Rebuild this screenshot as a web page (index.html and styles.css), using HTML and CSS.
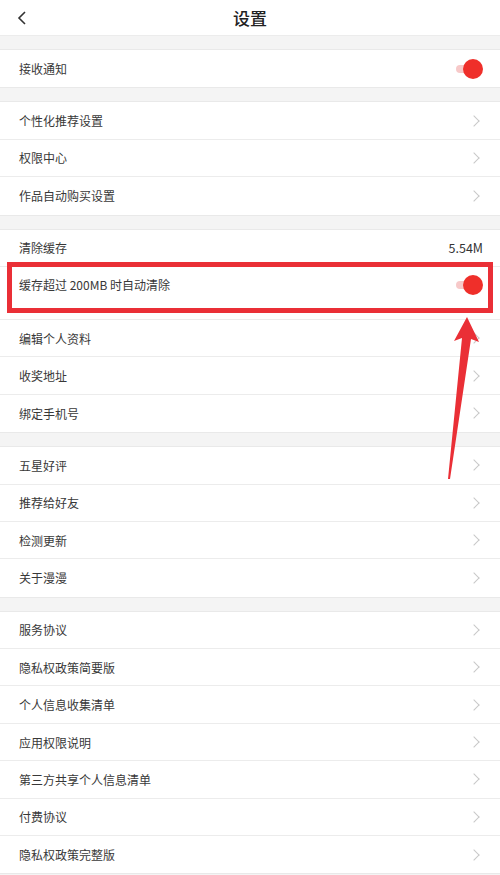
FILE: index.html
```html
<!DOCTYPE html>
<html>
<head>
<meta charset="UTF-8">
<title>设置</title>
<link rel="stylesheet" href="styles.css">
</head>
<body>
<div class="page">
    <div class="header">
        <svg class="back" width="12" height="16" viewBox="0 0 12 16"><path d="M9 2 L3 8 L9 14" fill="none" stroke="#333" stroke-width="1.6"/></svg>
        <div class="title">设置</div>
    </div>

    <div class="group">
        <div class="row"><span>接收通知</span><span class="switch"></span></div>
    </div>

    <div class="group">
        <div class="row"><span>个性化推荐设置</span><i class="chev"></i></div>
        <div class="row"><span>权限中心</span><i class="chev"></i></div>
        <div class="row"><span>作品自动购买设置</span><i class="chev"></i></div>
    </div>

    <div class="group">
        <div class="row"><span>清除缓存</span><span class="value">5.54M</span></div>
        <div class="row tall"><span>缓存超过 200MB 时自动清除</span><span class="switch"></span><div class="mark"></div></div>
        <div class="row"><span>编辑个人资料</span><i class="chev"></i></div>
        <div class="row"><span>收奖地址</span><i class="chev"></i></div>
        <div class="row"><span>绑定手机号</span><i class="chev"></i></div>
    </div>

    <div class="group">
        <div class="row"><span>五星好评</span><i class="chev"></i></div>
        <div class="row"><span>推荐给好友</span><i class="chev"></i></div>
        <div class="row"><span>检测更新</span><i class="chev"></i></div>
        <div class="row"><span>关于漫漫</span><i class="chev"></i></div>
    </div>

    <div class="group">
        <div class="row"><span>服务协议</span><i class="chev"></i></div>
        <div class="row"><span>隐私权政策简要版</span><i class="chev"></i></div>
        <div class="row"><span>个人信息收集清单</span><i class="chev"></i></div>
        <div class="row"><span>应用权限说明</span><i class="chev"></i></div>
        <div class="row"><span>第三方共享个人信息清单</span><i class="chev"></i></div>
        <div class="row"><span>付费协议</span><i class="chev"></i></div>
        <div class="row"><span>隐私权政策完整版</span><i class="chev"></i></div>
    </div>

    <!-- 标注箭头 -->
    <svg class="arrow" width="500" height="875" viewBox="0 0 500 875">
        <polygon points="467,317 479,342 471,339 450,479 448,479 462,338 454,341" fill="#ea2f36"/>
    </svg>
</div>
</body>
</html>
```

FILE: styles.css
```css
body{
    margin: 0;
    background: #f4f4f4;
    font-family: "Noto Sans CJK SC", "Noto Sans", sans-serif;
}
.page{
    position: relative;
    width: 500px;
    height: 875px;
    overflow: hidden;
}
.header{
    height: 36px;
    background: #fff;
    display: flex;
    align-items: center;
    justify-content: center;
    position: relative;
    border-bottom: 1px solid #ececec;
    box-sizing: border-box;
}
.header .back{
    position: absolute;
    left: 16px;
    top: 10px;
}
.title{
    font-size: 17px;
    font-weight: 500;
    color: #222;
}
.group{
    margin-top: 13px;
    background: #fff;
    border-top: 1px solid #e9e9e9;
    border-bottom: 1px solid #e9e9e9;
}
.row{
    height: 37.4px;
    box-sizing: border-box;
    padding: 0 18px 0 19px;
    display: flex;
    align-items: center;
    justify-content: space-between;
    font-size: 12px;
    color: #383838;
    border-bottom: 1px solid #ececec;
    position: relative;
}
.row:last-child{
    border-bottom: none;
}
.row.tall{
    height: 53px;
    padding-bottom: 16px;
}
.value{
    font-size: 12.5px;
    color: #333;
    margin-right: -1px;
}
.chev{
    width: 7px;
    height: 7px;
    border-top: 1px solid #c8c8c8;
    border-right: 1px solid #c8c8c8;
    transform: rotate(45deg);
    margin-right: 4px;
}
.switch{
    position: relative;
    width: 26px;
    height: 20px;
}
.switch:before{
    content: "";
    position: absolute;
    left: 0;
    top: 6px;
    width: 22px;
    height: 8px;
    border-radius: 4px;
    background: #f7c9c9;
}
.switch:after{
    content: "";
    position: absolute;
    right: -1px;
    top: 0;
    width: 20px;
    height: 20px;
    border-radius: 50%;
    background: #ef2f2a;
}
.mark{
    position: absolute;
    left: 7px;
    right: 7px;
    top: -5px;
    height: 51px;
    box-sizing: border-box;
    border: 5px solid #ea2f36;
}
.arrow{
    position: absolute;
    left: 0;
    top: 0;
    pointer-events: none;
}
```
